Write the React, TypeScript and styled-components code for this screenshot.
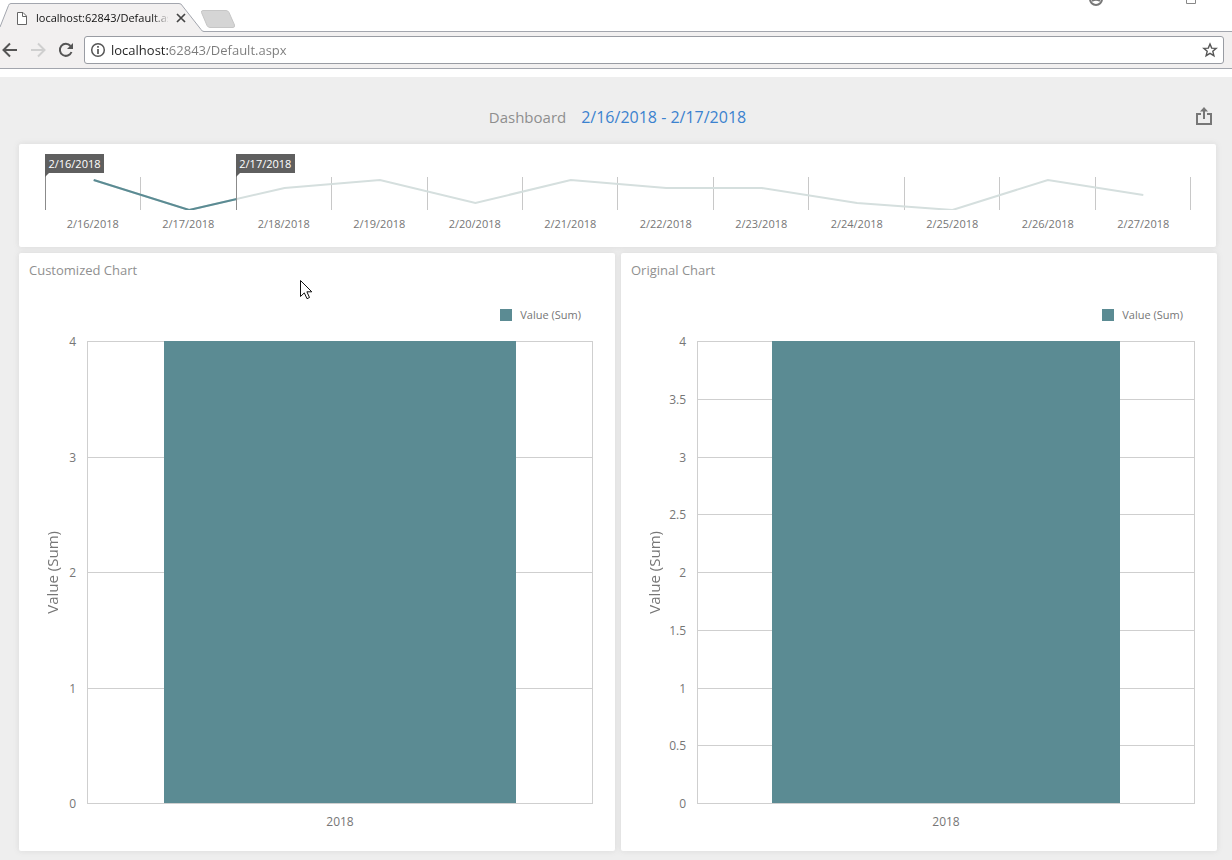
import React from "react";
import styled, { createGlobalStyle } from "styled-components";

const teal = "#5b8b93";
const uiFont = '"Open Sans", "Noto Sans", sans-serif';

const GlobalStyle = createGlobalStyle`
  *, *::before, *::after { box-sizing: border-box; }
  body { margin: 0; background: #fff; font-family: ${uiFont}; }
  button, input { font: inherit; }
  h1, h2 { margin: 0; font-weight: 400; }
`;

const Page = styled.div`
  display: flex;
  flex-direction: column;
  min-height: 100vh;
  position: relative;
  overflow: hidden;
`;

/* Browser chrome */

const TabStrip = styled.header`
  display: flex;
  justify-content: space-between;
  height: 32px;
  border-bottom: 1px solid #a3a6ae;
`;

const Tabs = styled.div`
  display: flex;
  height: 32px;
`;

const Tab = styled.div`
  position: relative;
  display: flex;
  align-items: center;
  width: 204px;
  height: 32px;
  padding: 4px 0 0 16px;
`;

const TabShape = styled.svg`
  position: absolute;
  inset: 0;
`;

const TabIcon = styled.svg`
  position: relative;
  flex: none;
`;

const TabTitle = styled.span`
  position: relative;
  flex: none;
  width: 132px;
  margin: 0 4px 0 8px;
  overflow: hidden;
  white-space: nowrap;
  font-size: 11px;
  line-height: 16px;
  color: #111;
  mask-image: linear-gradient(to right, #000 116px, transparent 134px);
`;

const IconButton = styled.button<{ $size?: number }>`
  position: relative;
  display: flex;
  flex: none;
  align-items: center;
  justify-content: center;
  width: ${(p) => p.$size ?? 20}px;
  height: ${(p) => p.$size ?? 20}px;
  padding: 0;
  border: 0;
  background: none;
  color: #555;
`;

const NewTab = styled.button`
  width: 36px;
  height: 18px;
  margin: 10px 0 0 -4px;
  padding: 0;
  border: 0;
  background: none;
  z-index: 1;
`;

const WindowControls = styled.div`
  display: flex;
  gap: 80px;
  padding-right: 35px;
`;

const Toolbar = styled.div`
  display: flex;
  align-items: center;
  gap: 8px;
  height: 37px;
  padding: 0 8px 0 0;
  border-bottom: 1px solid #a3a6ae;
  background: #f2f0f0;
`;

const AddressBox = styled.div`
  display: flex;
  flex: 1;
  align-items: center;
  gap: 3px;
  height: 28px;
  padding: 0 3px;
  border: 1px solid #999ca3;
  border-radius: 3px;
  background: #fff;
`;

const AddressInput = styled.input`
  flex: 1;
  min-width: 0;
  padding: 0;
  border: 0;
  outline: 0;
  font-size: 13px;
  line-height: 20px;
  color: transparent;
  caret-color: #222;
  background: linear-gradient(to right, #222 58px, #7b7b7b 58px) text;
`;

/* Dashboard */

const Dashboard = styled.main`
  display: flex;
  flex: 1;
  flex-direction: column;
  margin-top: 8px;
  padding: 0 15px 9px 19px;
  background: #eeeeee;
`;

const TitleBar = styled.div`
  display: grid;
  grid-template-columns: 1fr auto 1fr;
  align-items: center;
  height: 67px;
  padding: 12px 1px 0 0;
`;

const Title = styled.div`
  display: flex;
  grid-column: 2;
  gap: 15px;
  font-size: 16px;
  line-height: 24px;
  color: #8e8e8e;
`;

const DashboardName = styled.h1`
  font-size: 15px;
`;

const DateFilter = styled.span`
  color: #3b82cf;
`;

const ExportCell = styled.div`
  display: flex;
  justify-content: flex-end;
`;

const Card = styled.section`
  border-radius: 2px;
  background: #fff;
  box-shadow: 0 0 5px 1px #dfdfdf;
`;

const RangeCard = styled(Card)`
  height: 103px;
  padding: 33px 25px 0 26px;
  margin-right: 1px;
`;

const RangePlot = styled.div`
  position: relative;
  display: grid;
  grid-template-columns: repeat(12, 1fr);
  height: 33px;
  border-left: 1px solid #c8c8c8;
`;

const RangeTick = styled.div`
  border-right: 1px solid #c8c8c8;
`;

const RangeLine = styled.svg`
  position: absolute;
  inset: 0;
  width: 100%;
  height: 33px;
`;

const RangeHandle = styled.div<{ $at: number }>`
  position: absolute;
  top: -23px;
  bottom: 0;
  left: calc(${(p) => (p.$at * 100) / 12}% - 1px);
  border-left: 1px solid #8b8b8b;
`;

const HandleLabel = styled.div`
  position: relative;
  width: 59px;
  height: 19px;
  margin-left: -1px;
  font-size: 11px;
  line-height: 19px;
  text-align: center;
  color: #fff;
  background: #5f5f5f;

  &::after {
    content: "";
    position: absolute;
    top: 100%;
    left: 0;
    border-top: 4px solid #5f5f5f;
    border-right: 4px solid transparent;
  }
`;

const RangeLabels = styled.div`
  display: grid;
  grid-template-columns: repeat(12, 1fr);
  margin-top: 6px;
  font-size: 11px;
  line-height: 16px;
  text-align: center;
  color: #767676;
`;

const ChartRow = styled.div`
  display: grid;
  flex: 1;
  grid-template-columns: 1fr 1fr;
  gap: 6px;
  margin-top: 6px;
`;

const ChartCard = styled(Card)`
  display: flex;
  flex-direction: column;
  min-height: 400px;
  padding: 7px 22px 19px 10px;
`;

const ChartTitle = styled.h2`
  font-size: 13px;
  line-height: 20px;
  color: #909090;
`;

const Legend = styled.div`
  display: flex;
  align-items: center;
  justify-content: flex-end;
  gap: 8px;
  margin: 25px 12px 16px 0;
  font-size: 11px;
  line-height: 20px;
  color: #767676;
`;

const Swatch = styled.span`
  width: 12px;
  height: 12px;
  background: ${teal};
`;

const ChartBody = styled.div<{ $labelWidth: number }>`
  display: grid;
  flex: 1;
  grid-template-columns: 20px ${(p) => p.$labelWidth}px 1fr;
  grid-template-rows: 1fr 20px;
  row-gap: 8px;
  padding-left: 13px;
`;

const AxisTitle = styled.div`
  align-self: center;
  justify-self: center;
  writing-mode: vertical-rl;
  transform: rotate(180deg);
  font-size: 15px;
  line-height: 20px;
  color: #767676;
`;

const AxisLabels = styled.div`
  display: flex;
  flex-direction: column;
  justify-content: space-between;
  margin: -8px 11px -8px 0;
  font-size: 12px;
  line-height: 17px;
  text-align: right;
  color: #767676;
`;

const Plot = styled.div`
  position: relative;
  display: flex;
  flex-direction: column;
  border: 1px solid #cfcfcf;
`;

const GridBand = styled.div`
  flex: 1;

  & + & {
    border-top: 1px solid #cfcfcf;
  }
`;

const Bar = styled.div`
  position: absolute;
  top: -1px;
  bottom: 0;
  left: 15%;
  right: 15%;
  background: ${teal};
`;

const CategoryLabel = styled.div`
  grid-column: 3;
  font-size: 12px;
  line-height: 20px;
  text-align: center;
  color: #767676;
`;

const Pointer = styled.svg`
  position: absolute;
  top: 280px;
  left: 300px;
`;

const days = Array.from({ length: 12 }, (_, i) => `2/${16 + i}/2018`);
const dayLevels = [3, 33, 11, 3, 26, 3, 11, 11, 26, 33, 3, 18];
const linePoints = dayLevels.map((y, i) => `${50 + i * 100},${y}`).join(" ");

function Chart({ title, ticks, labelWidth }: { title: string; ticks: number[]; labelWidth: number }) {
  return (
    <ChartCard>
      <ChartTitle>{title}</ChartTitle>
      <Legend>
        <Swatch />
        Value (Sum)
      </Legend>
      <ChartBody $labelWidth={labelWidth}>
        <AxisTitle>Value (Sum)</AxisTitle>
        <AxisLabels>
          {ticks.map((t) => (
            <span key={t}>{t}</span>
          ))}
        </AxisLabels>
        <Plot>
          {ticks.slice(1).map((t) => (
            <GridBand key={t} />
          ))}
          <Bar />
        </Plot>
        <CategoryLabel>2018</CategoryLabel>
      </ChartBody>
    </ChartCard>
  );
}

export default function App() {
  return (
    <Page>
      <GlobalStyle />
      <TabStrip>
        <Tabs>
          <Tab>
            <TabShape width="204" height="32" aria-hidden="true">
              <path d="M0 32V27L8.500 5.500Q9 3.500 11 3.500H179Q181.500 3.500 182.500 6L201 29.500Q202 31.500 204 31.500V32Z" fill="#f2f0f0" />
              <path d="M0 27L8.500 5.500Q9 3.500 11 3.500H179Q181.500 3.500 182.500 6L201 29.500Q202 31.500 204 31.500" fill="none" stroke="#a3a6ae" />
            </TabShape>
            <TabIcon width="12" height="15" viewBox="0 0 12 15" fill="#fff" stroke="#666" aria-hidden="true">
              <path d="M1.500 1.500H7L10.500 5V13.500H1.500Z" />
              <path d="M6.500 1.500V5.500H10.500" fill="none" />
            </TabIcon>
            <TabTitle>localhost:62843/Default.aspx</TabTitle>
            <IconButton $size={16} aria-label="Close tab">
              <svg width="16" height="16" viewBox="0 0 16 16" stroke="#444" strokeWidth="1.700">
                <path d="M5 4L13 12M13 4L5 12" />
              </svg>
            </IconButton>
          </Tab>
          <NewTab aria-label="New tab">
            <svg width="36" height="18" viewBox="0 0 36 18" display="block">
              <path d="M3 0.500H26Q28 0.500 29 2.500L34.500 15Q35 17.500 33 17.500H10Q8 17.500 7 15.500L1.500 2.500Q1 0.500 3 0.500Z" fill="#d5d5d5" stroke="#c6c6c6" />
            </svg>
          </NewTab>
        </Tabs>
        <WindowControls>
          <svg width="16" height="8" viewBox="0 0 16 8" fill="none" stroke="#777" strokeWidth="2" aria-hidden="true">
            <circle cx="7" cy="-1" r="6" />
            <path d="M3 1Q7 -1.500 11 1" />
          </svg>
          <svg width="12" height="5" viewBox="0 0 12 5" fill="none" stroke="#888" aria-hidden="true">
            <path d="M1.500 -2V3.500H10.500V-2" />
          </svg>
        </WindowControls>
      </TabStrip>

      <Toolbar>
        <IconButton aria-label="Back">
          <svg width="20" height="20" viewBox="0 0 20 20" fill="none" stroke="#555" strokeWidth="2">
            <path d="M17 10H4M10 3.500L3.500 10L10 16.500" />
          </svg>
        </IconButton>
        <IconButton aria-label="Forward">
          <svg width="20" height="20" viewBox="0 0 20 20" fill="none" stroke="#cfcfcf" strokeWidth="2">
            <path d="M3 10H16M10 3.500L16.500 10L10 16.500" />
          </svg>
        </IconButton>
        <IconButton aria-label="Reload">
          <svg width="20" height="20" viewBox="0 0 20 20" fill="none" stroke="#555" strokeWidth="2">
            <path d="M15.500 12A6 6 0 1 1 14.500 6" />
            <path d="M17 3V9H11Z" fill="#555" stroke="none" />
          </svg>
        </IconButton>
        <AddressBox>
          <IconButton aria-label="Site information">
            <svg width="16" height="16" viewBox="0 0 16 16" fill="none" stroke="#555">
              <circle cx="8" cy="8" r="6.300" strokeWidth="1.500" />
              <path d="M8 7V12M8 4V5.700" strokeWidth="1.700" />
            </svg>
          </IconButton>
          <AddressInput aria-label="Address" defaultValue="localhost:62843/Default.aspx" />
          <IconButton aria-label="Bookmark">
            <svg width="16" height="16" viewBox="0 0 16 16" fill="none" stroke="#555" strokeWidth="1.400">
              <path d="M8 2L9.700 6.100L14.200 6.400L10.800 9.300L11.900 13.700L8 11.300L4.100 13.700L5.200 9.300L1.800 6.400L6.300 6.100Z" />
            </svg>
          </IconButton>
        </AddressBox>
      </Toolbar>

      <Dashboard>
        <TitleBar>
          <Title>
            <DashboardName>Dashboard</DashboardName>
            <DateFilter>2/16/2018 - 2/17/2018</DateFilter>
          </Title>
          <ExportCell>
            <IconButton aria-label="Export" $size={24}>
              <svg width="18" height="20" viewBox="0 0 18 20" fill="none" stroke="#777" strokeWidth="2">
                <path d="M6 7H2V17H16V7H12M9 12V2" />
                <path d="M9 0L13 4.500H5Z" fill="#777" stroke="none" />
              </svg>
            </IconButton>
          </ExportCell>
        </TitleBar>

        <RangeCard>
          <RangePlot>
            {days.map((d) => (
              <RangeTick key={d} />
            ))}
            <RangeLine viewBox="0 0 1200 33" preserveAspectRatio="none" fill="none" strokeWidth="2" aria-hidden="true">
              <polyline points={linePoints} stroke="#d5dfde" vectorEffect="non-scaling-stroke" />
              <polyline points="50,3 150,33 200,22" stroke={teal} vectorEffect="non-scaling-stroke" />
            </RangeLine>
            <RangeHandle $at={0}>
              <HandleLabel>2/16/2018</HandleLabel>
            </RangeHandle>
            <RangeHandle $at={2}>
              <HandleLabel>2/17/2018</HandleLabel>
            </RangeHandle>
          </RangePlot>
          <RangeLabels>
            {days.map((d) => (
              <span key={d}>{d}</span>
            ))}
          </RangeLabels>
        </RangeCard>

        <ChartRow>
          <Chart title="Customized Chart" ticks={[4, 3, 2, 1, 0]} labelWidth={25} />
          <Chart title="Original Chart" ticks={[4, 3.5, 3, 2.5, 2, 1.5, 1, 0.5, 0]} labelWidth={33} />
        </ChartRow>
      </Dashboard>

      <Pointer width="13" height="21" viewBox="0 0 13 21" fill="#fff" stroke="#111" aria-hidden="true">
        <path d="M0.500 0.500V16.500L4.300 12.900L7 18.700L9.500 17.500L6.900 11.800H11.800Z" />
      </Pointer>
    </Page>
  );
}
